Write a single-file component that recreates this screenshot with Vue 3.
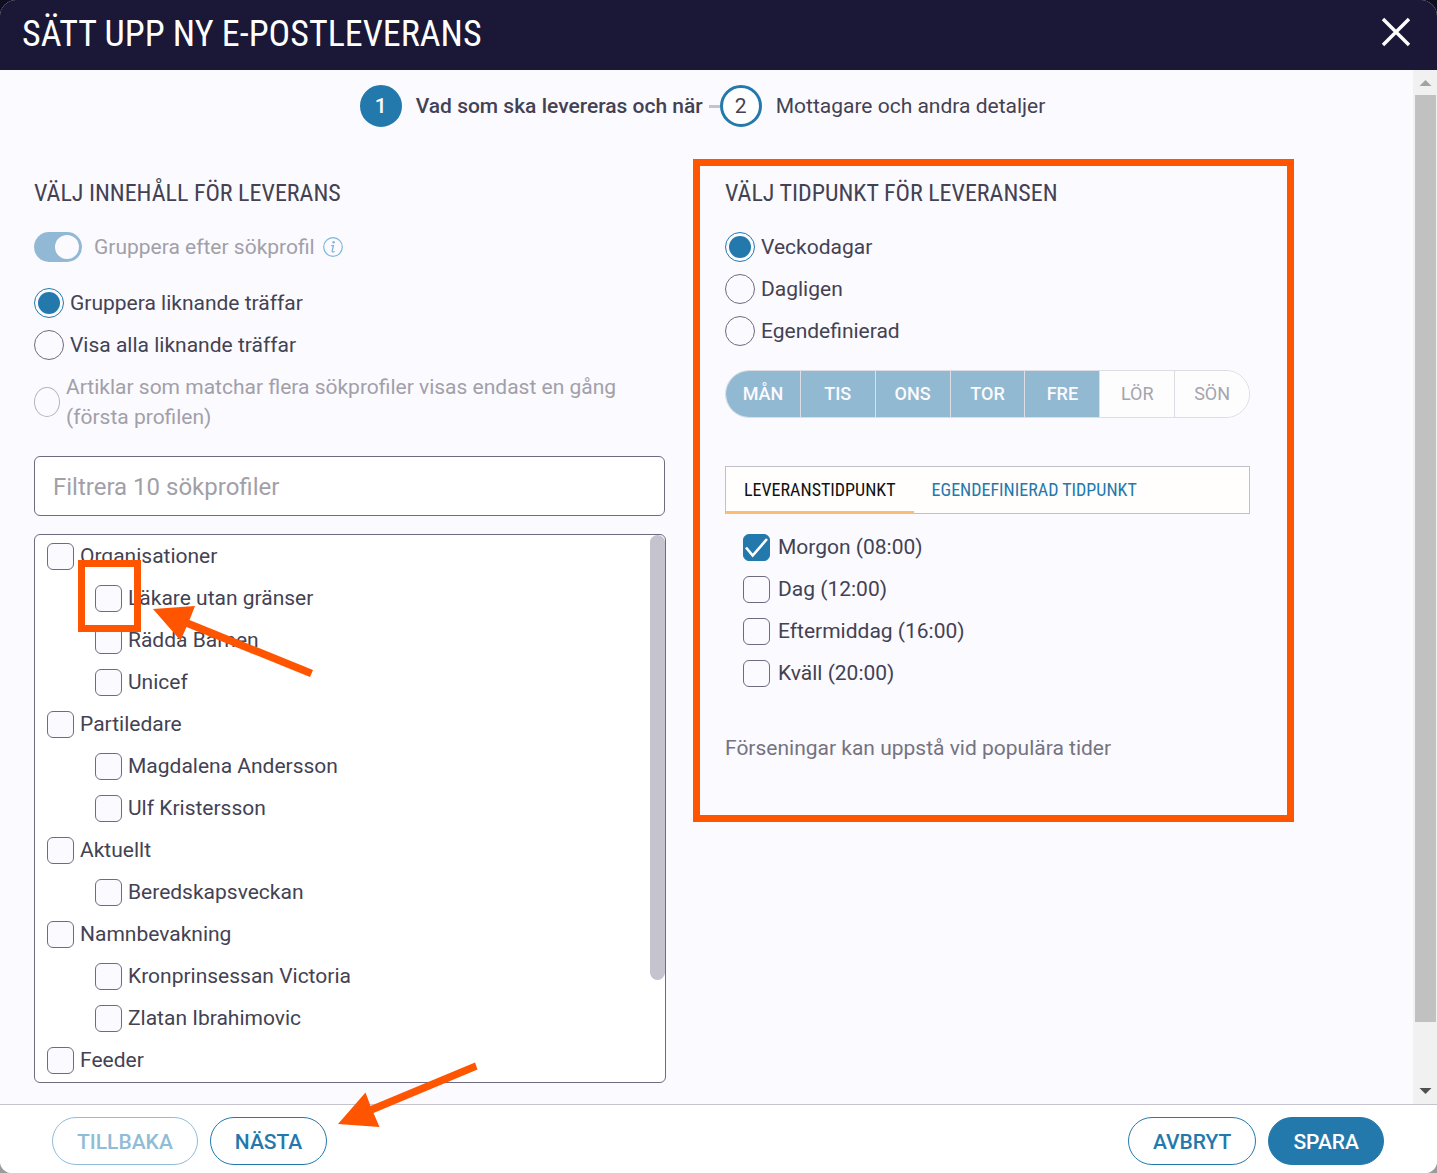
<script setup>
import { ref } from 'vue'

const similar = ref('group')
const schedule = ref('weekdays')
const filter = ref('')

const scheduleOptions = [
  { id: 'weekdays', label: 'Veckodagar' },
  { id: 'daily', label: 'Dagligen' },
  { id: 'custom', label: 'Egendefinierad' },
]

const days = [
  { label: 'MÅN', on: true },
  { label: 'TIS', on: true },
  { label: 'ONS', on: true },
  { label: 'TOR', on: true },
  { label: 'FRE', on: true },
  { label: 'LÖR', on: false },
  { label: 'SÖN', on: false },
]

const times = ref([
  { label: 'Morgon (08:00)', on: true },
  { label: 'Dag (12:00)', on: false },
  { label: 'Eftermiddag (16:00)', on: false },
  { label: 'Kväll (20:00)', on: false },
])

const profiles = ref([
  { label: 'Organisationer', on: false },
  { label: 'Läkare utan gränser', child: true, marked: true, on: false },
  { label: 'Rädda Barnen', child: true, on: false },
  { label: 'Unicef', child: true, on: false },
  { label: 'Partiledare', on: false },
  { label: 'Magdalena Andersson', child: true, on: false },
  { label: 'Ulf Kristersson', child: true, on: false },
  { label: 'Aktuellt', on: false },
  { label: 'Beredskapsveckan', child: true, on: false },
  { label: 'Namnbevakning', on: false },
  { label: 'Kronprinsessan Victoria', child: true, on: false },
  { label: 'Zlatan Ibrahimovic', child: true, on: false },
  { label: 'Feeder', on: false },
])
</script>

<template>
  <div class="dialog" role="dialog" aria-labelledby="dialog-title">
    <header class="header">
      <h1 id="dialog-title">SÄTT UPP NY E-POSTLEVERANS</h1>
      <button class="close" type="button" aria-label="Stäng">
        <svg viewBox="0 0 30 30" width="30" height="30">
          <path d="M2 0 L28 26 M28 0 L2 26" stroke="#fff" stroke-width="3.4" fill="none" overflow="visible" />
        </svg>
      </button>
    </header>

    <div class="body">
      <main class="content">
        <ol class="stepper">
          <li class="step current"><span class="dot">1</span><span>Vad som ska levereras och när</span></li>
          <li class="line"></li>
          <li class="step"><span class="dot">2</span><span>Mottagare och andra detaljer</span></li>
        </ol>

        <div class="columns">
          <section>
            <h2>VÄLJ INNEHÅLL FÖR LEVERANS</h2>
            <label class="row toggle-row">
              <input class="toggle" type="checkbox" role="switch" checked disabled />
              <span>Gruppera efter sökprofil</span>
              <svg class="info" viewBox="0 0 20 20" width="20" height="20" fill="none" stroke="#7fb6d8">
                <circle cx="10" cy="10" r="9.3" stroke-width="1.2" />
                <circle cx="10.6" cy="5.2" r="1.2" fill="#7fb6d8" stroke="none" />
                <path d="M8.2 8.7 H10.4 L9.2 13.8 Q9 15.4 10.4 15 L11.6 14.3" stroke-width="1.3" />
              </svg>
            </label>
            <label class="row">
              <input v-model="similar" class="radio" type="radio" name="similar" value="group" />
              <span>Gruppera liknande träffar</span>
            </label>
            <label class="row">
              <input v-model="similar" class="radio" type="radio" name="similar" value="all" />
              <span>Visa alla liknande träffar</span>
            </label>
            <label class="row once">
              <input class="radio narrow" type="radio" name="similar" value="once" disabled />
              <span>Artiklar som matchar flera sökprofiler visas endast en gång (första profilen)</span>
            </label>

            <input v-model="filter" class="filter" type="text" placeholder="Filtrera 10 sökprofiler" aria-label="Filtrera sökprofiler" />

            <div class="profiles">
              <label v-for="p in profiles" :key="p.label" class="row" :class="{ child: p.child }">
                <span class="box">
                  <input v-model="p.on" class="check" type="checkbox" />
                </span>
                <span>{{ p.label }}</span>
                <template v-if="p.marked">
                  <span class="marker"></span>
                  <svg class="arrow arrow-profile" viewBox="0 0 160 72" width="160" height="72">
                    <path d="M0 4 L42 1 L36.500 15 L160 65 L157 72 L33.500 22 L27.500 35.500 Z" fill="#ff5500" />
                  </svg>
                </template>
              </label>
              <div class="profiles-thumb"></div>
            </div>
          </section>

          <section>
            <div class="timing">
              <h2>VÄLJ TIDPUNKT FÖR LEVERANSEN</h2>
              <label v-for="o in scheduleOptions" :key="o.id" class="row">
                <input v-model="schedule" class="radio" type="radio" name="schedule" :value="o.id" />
                <span>{{ o.label }}</span>
              </label>

              <div class="days">
                <button v-for="d in days" :key="d.label" type="button" disabled :class="{ on: d.on }">{{ d.label }}</button>
              </div>

              <div class="tabs" role="tablist">
                <button type="button" role="tab" aria-selected="true" class="active">LEVERANSTIDPUNKT</button>
                <button type="button" role="tab" aria-selected="false">EGENDEFINIERAD TIDPUNKT</button>
              </div>

              <div class="times">
                <label v-for="t in times" :key="t.label" class="row">
                  <span class="box">
                    <input v-model="t.on" class="check" type="checkbox" />
                    <svg v-if="t.on" viewBox="0 0 27 27" width="27" height="27">
                      <path d="M3 13.500 L9.700 21.500 L24 5" stroke="#fff" stroke-width="2.6" fill="none" />
                    </svg>
                  </span>
                  <span>{{ t.label }}</span>
                </label>
              </div>

              <p class="note">Förseningar kan uppstå vid populära tider</p>
            </div>
          </section>
        </div>
      </main>

      <div class="scrollbar">
        <svg viewBox="0 0 24 25" width="24" height="25"><path d="M6.500 16 L12.500 10 L18.500 16 Z" fill="#a3a3a3" /></svg>
        <div class="thumb"></div>
        <div class="rest"></div>
        <svg viewBox="0 0 24 25" width="24" height="25"><path d="M6.500 9 L12.500 15 L18.500 9 Z" fill="#505050" /></svg>
      </div>
    </div>

    <footer class="footer">
      <button class="pill" type="button" disabled>TILLBAKA</button>
      <button class="pill next" type="button">
        NÄSTA
        <svg class="arrow arrow-next" viewBox="0 0 140 66" width="140" height="66">
          <path d="M0 62 L27.500 30.500 L32.500 44 L137 0.500 L139.500 7.500 L35.500 51 L41.500 65 Z" fill="#ff5500" />
        </svg>
      </button>
      <span class="spacer"></span>
      <button class="pill" type="button">AVBRYT</button>
      <button class="pill primary" type="button">SPARA</button>
    </footer>
  </div>
</template>

<style>
body {
  background: linear-gradient(#0f0e20 50%, #9b9b9b 50%);
}
</style>

<style scoped>
.dialog,
.dialog * {
  box-sizing: border-box;
}
.dialog {
  display: flex;
  flex-direction: column;
  min-height: 100vh;
  overflow: hidden;
  border-radius: 16px 16px 12px 12px;
  background: #fbfaff;
  color: #434253;
  font: 400 21px/30px Roboto, sans-serif;
}
button {
  margin: 0;
  font-family: inherit;
  cursor: pointer;
}
h1,
h2 {
  margin: 0;
  font-family: "Roboto Condensed", "Liberation Sans Narrow", Roboto, sans-serif;
  font-weight: 400;
}
.header {
  display: flex;
  align-items: center;
  justify-content: space-between;
  height: 70px;
  padding: 0 26px 2px 22px;
  background: #1a1836;
  color: #fff;
}
h1 {
  font-size: 36px;
  line-height: 44px;
}
.close {
  display: flex;
  padding: 0;
  border: 0;
  background: none;
}
.close svg {
  overflow: visible;
}
.body {
  display: flex;
  flex: 1;
}
.content {
  flex: 1;
  padding: 15px 34px 21px;
}

.stepper {
  display: flex;
  align-items: center;
  justify-content: center;
  margin: 0 0 51px;
  padding: 0 8px 0 0;
  list-style: none;
}
.step {
  display: flex;
  align-items: center;
  gap: 14px;
}
.current {
  font-weight: 500;
}
.dot {
  display: flex;
  align-items: center;
  justify-content: center;
  width: 42px;
  height: 42px;
  border: 3px solid #2479ac;
  border-radius: 50%;
  background: #fff;
}
.current .dot {
  background: #2479ac;
  color: #fff;
}
.line {
  width: 11px;
  height: 3px;
  margin-left: 6px;
  background: #c4c3ce;
}

.columns {
  display: grid;
  grid-template-columns: 631fr 654fr;
  gap: 60px;
}
h2 {
  margin-bottom: 18px;
  font-size: 24px;
  line-height: 30px;
}
.row {
  display: flex;
  align-items: center;
  gap: 6px;
  min-height: 42px;
}
input {
  flex: none;
  margin: 0;
  appearance: none;
}
.toggle-row {
  gap: 12px;
  margin-bottom: 14px;
  color: #a1a0a9;
}
.toggle {
  display: flex;
  justify-content: flex-end;
  width: 48px;
  height: 30px;
  padding: 3px;
  border-radius: 15px;
  background: #91b9d5;
}
.toggle::after {
  content: "";
  width: 24px;
  height: 24px;
  border-radius: 50%;
  background: #fbfaff;
}
.info {
  margin-left: -4px;
}
.radio {
  width: 30px;
  height: 30px;
  padding: 3px;
  border: 1px solid #6e6b80;
  border-radius: 50%;
}
.radio:checked {
  border-color: #2479ac;
  background: #2479ac content-box;
}
.narrow {
  width: 26px;
  border-color: #b6b5bf;
}
.once {
  margin: 6px 0 24px;
  color: #a1a0a9;
}
.filter {
  display: block;
  width: 100%;
  height: 60px;
  margin-bottom: 18px;
  padding: 2px 18px 0;
  border: 1px solid #6e6b80;
  border-radius: 6px;
  background: #fff;
  color: inherit;
  font: 400 24px/30px Roboto, sans-serif;
}
.filter::placeholder {
  color: #a1a0a9;
  opacity: 1;
}
.profiles {
  position: relative;
  margin-right: -1px;
  padding: 0 12px 1px;
  border: 1px solid #6e6b80;
  border-radius: 6px;
  background: #fff;
}
.profiles .row {
  position: relative;
}
.child {
  padding-left: 48px;
}
.profiles-thumb {
  position: absolute;
  top: 0;
  right: 0;
  width: 15px;
  height: 445px;
  border-radius: 8px;
  background: #c4c3ce;
}
.box {
  position: relative;
  display: flex;
  flex: none;
}
.box svg {
  position: absolute;
  inset: 0;
}
.check {
  width: 27px;
  height: 27px;
  border: 1px solid #6e6b80;
  border-radius: 6px;
  background: #fbfaff;
}
.check:checked {
  border-color: #2479ac;
  background: #2479ac;
}

/* Highlights that guide the reader through the form */
.marker {
  position: absolute;
  z-index: 1;
  top: -17px;
  left: 31px;
  width: 63px;
  height: 72px;
  border: 7px solid #ff5500;
}
.arrow {
  position: absolute;
  z-index: 2;
  pointer-events: none;
}
.arrow-profile {
  top: 28px;
  left: 106px;
}
.arrow-next {
  right: -152px;
  bottom: 36px;
}
.timing {
  position: relative;
  max-width: 525px;
}
.timing::after {
  content: "";
  position: absolute;
  inset: -19px -44px -44px -32px;
  border: 7px solid #ff5500;
  pointer-events: none;
}

.days {
  display: flex;
  height: 48px;
  margin: 18px 0 48px;
  overflow: hidden;
  border: 1px solid #dddde3;
  border-radius: 24px;
}
.days button {
  flex: 1;
  padding: 0;
  border: 0;
  border-left: 1px solid #dddde3;
  background: #fdfdfe;
  color: #a5a4ad;
  font-size: 18px;
  line-height: 24px;
}
.days button:first-child {
  border-left: 0;
}
.days .on {
  background: #91b9d2;
  color: #fbfaff;
  font-weight: 500;
}
.tabs {
  display: flex;
  height: 48px;
  margin-bottom: 12px;
  border: 1px solid #c0bfca;
  background: #fffefd;
}
.tabs button {
  margin-bottom: -1px;
  padding: 1px 18px 0;
  border: 0;
  border-bottom: 3px solid transparent;
  background: none;
  color: #2479ac;
  font: 400 18px/24px "Roboto Condensed", "Liberation Sans Narrow", Roboto, sans-serif;
}
.tabs .active {
  border-bottom-color: #fbbd76;
  color: #111;
}
.times {
  padding-left: 18px;
}
.times .row {
  gap: 8px;
}
.note {
  margin: 0;
  padding: 39px 0 15px;
  color: #74737f;
}

.scrollbar {
  display: flex;
  flex-direction: column;
  width: 24px;
  background: #f1f1f1;
}
.scrollbar svg {
  flex: none;
}
.thumb {
  flex: 927;
  margin: 0 1px 0 2px;
  background: #c1c1c1;
}
.rest {
  flex: 57;
}

.footer {
  display: flex;
  align-items: center;
  gap: 12px;
  padding: 12px 53px 8px 52px;
  border-top: 1px solid #c4c3ce;
  background: #fff;
}
.spacer {
  flex: 1;
}
.pill {
  height: 48px;
  padding: 2px 24px 0;
  border: 1px solid #2479ac;
  border-radius: 24px;
  background: #fff;
  color: #2479ac;
  font-size: 21px;
  font-weight: 500;
  line-height: 24px;
}
.pill:disabled {
  border-color: #91bcd7;
  color: #91bcd7;
}
.next {
  position: relative;
}
.primary {
  background: #2479ac;
  color: #fff;
}
</style>
